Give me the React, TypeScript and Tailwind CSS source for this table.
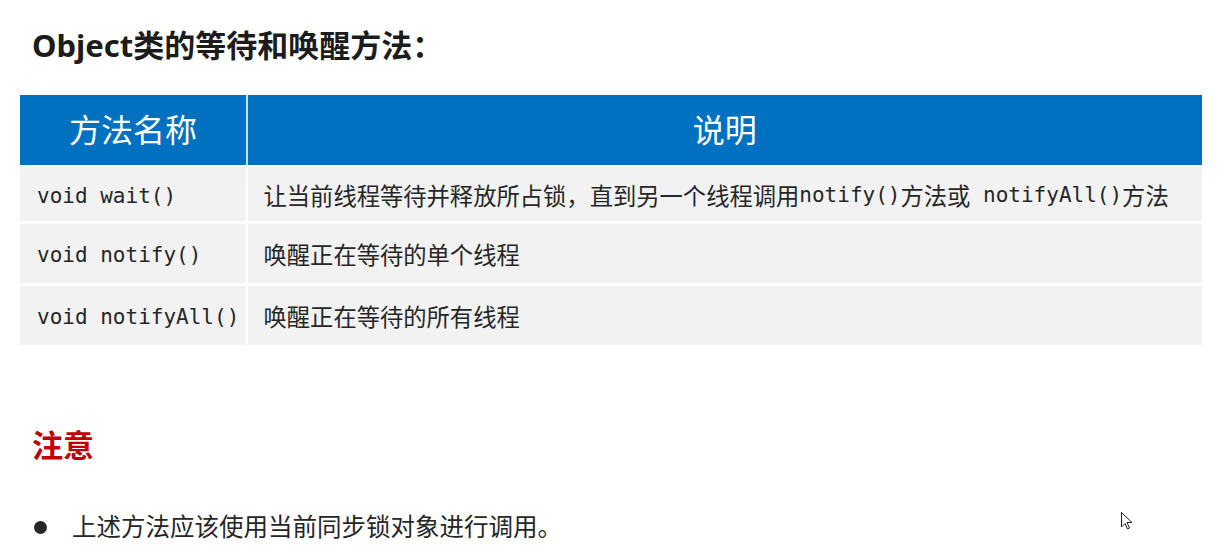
import React from "react";

const sans = "font-['Noto_Sans','Noto_Sans_CJK_SC',sans-serif]";
const mono = "font-['DejaVu_Sans_Mono','Noto_Sans_CJK_SC',monospace]";

const rows = [
  {
    name: "void wait()",
    h: "h-[54px]",
    desc: (
      <>
        让当前线程等待并释放所占锁，直到另一个线程调用
        <span className={mono + " text-[21px]"}>notify()</span>
        方法或
        <span className={mono + " text-[21px]"}> notifyAll()</span>
        方法
      </>
    ),
  },
  { name: "void notify()", h: "h-[59px]", desc: "唤醒正在等待的单个线程" },
  { name: "void notifyAll()", h: "h-[59px]", desc: "唤醒正在等待的所有线程" },
];

function Cursor() {
  return (
    <svg
      className="absolute left-[1120px] top-[511px]"
      width="14"
      height="20"
      viewBox="0 0 14 20"
    >
      <path
        d="M1.5 1.5 L1.5 16 L5 12.5 L7.5 18 L9.5 17 L7 11.5 L12 11.5 Z"
        fill="#fff"
        stroke="#222"
        strokeWidth="1"
        strokeLinejoin="round"
      />
    </svg>
  );
}

export default function App() {
  return (
    <div className={"relative w-[1218px] h-[554px] overflow-hidden bg-white text-[#262626] " + sans}>
      {/* 标题 */}
      <h1 className="pl-[32px] pt-[25px] h-[65px] text-[31px] leading-[40px] font-bold text-[#1c1c1c]">
        Object类的等待和唤醒方法：
      </h1>

      {/* 表格 */}
      <div className="ml-[20px] mt-[30px] w-[1182px] flex flex-col">
        <div className="h-[70px] flex bg-[#0070c0] text-white text-[32px]">
          <div className="w-[226px] flex items-center justify-center">方法名称</div>
          <div className="w-[1.5px] bg-[#bfe3fb]" />
          <div className="flex-1 flex items-center justify-center">说明</div>
        </div>
        <div className="mt-[2px] flex flex-col gap-[3px]">
          {rows.map((r) => (
            <div key={r.name} className={"flex bg-[#f2f2f2] " + r.h}>
              <div className={"w-[226px] flex items-center pl-[17px] pt-[5px] text-[21px] " + mono}>
                {r.name}
              </div>
              <div className="w-[1.5px] bg-white" />
              <div className="flex-1 flex items-center pl-[16px] pt-[4px] text-[23.3px] whitespace-pre">
                {r.desc}
              </div>
            </div>
          ))}
        </div>
      </div>

      {/* 注意 */}
      <div className="pl-[32px] mt-[80px] h-[40px] leading-[40px] text-[31px] font-bold text-[#c00000]">
        注意
      </div>
      <div className="mt-[42px] h-[40px] flex items-center">
        <span className="ml-[34px] w-[13px] h-[13px] rounded-full bg-[#262626]" />
        <span className="ml-[25px] text-[24.5px]">上述方法应该使用当前同步锁对象进行调用。</span>
      </div>

      <Cursor />
    </div>
  );
}
